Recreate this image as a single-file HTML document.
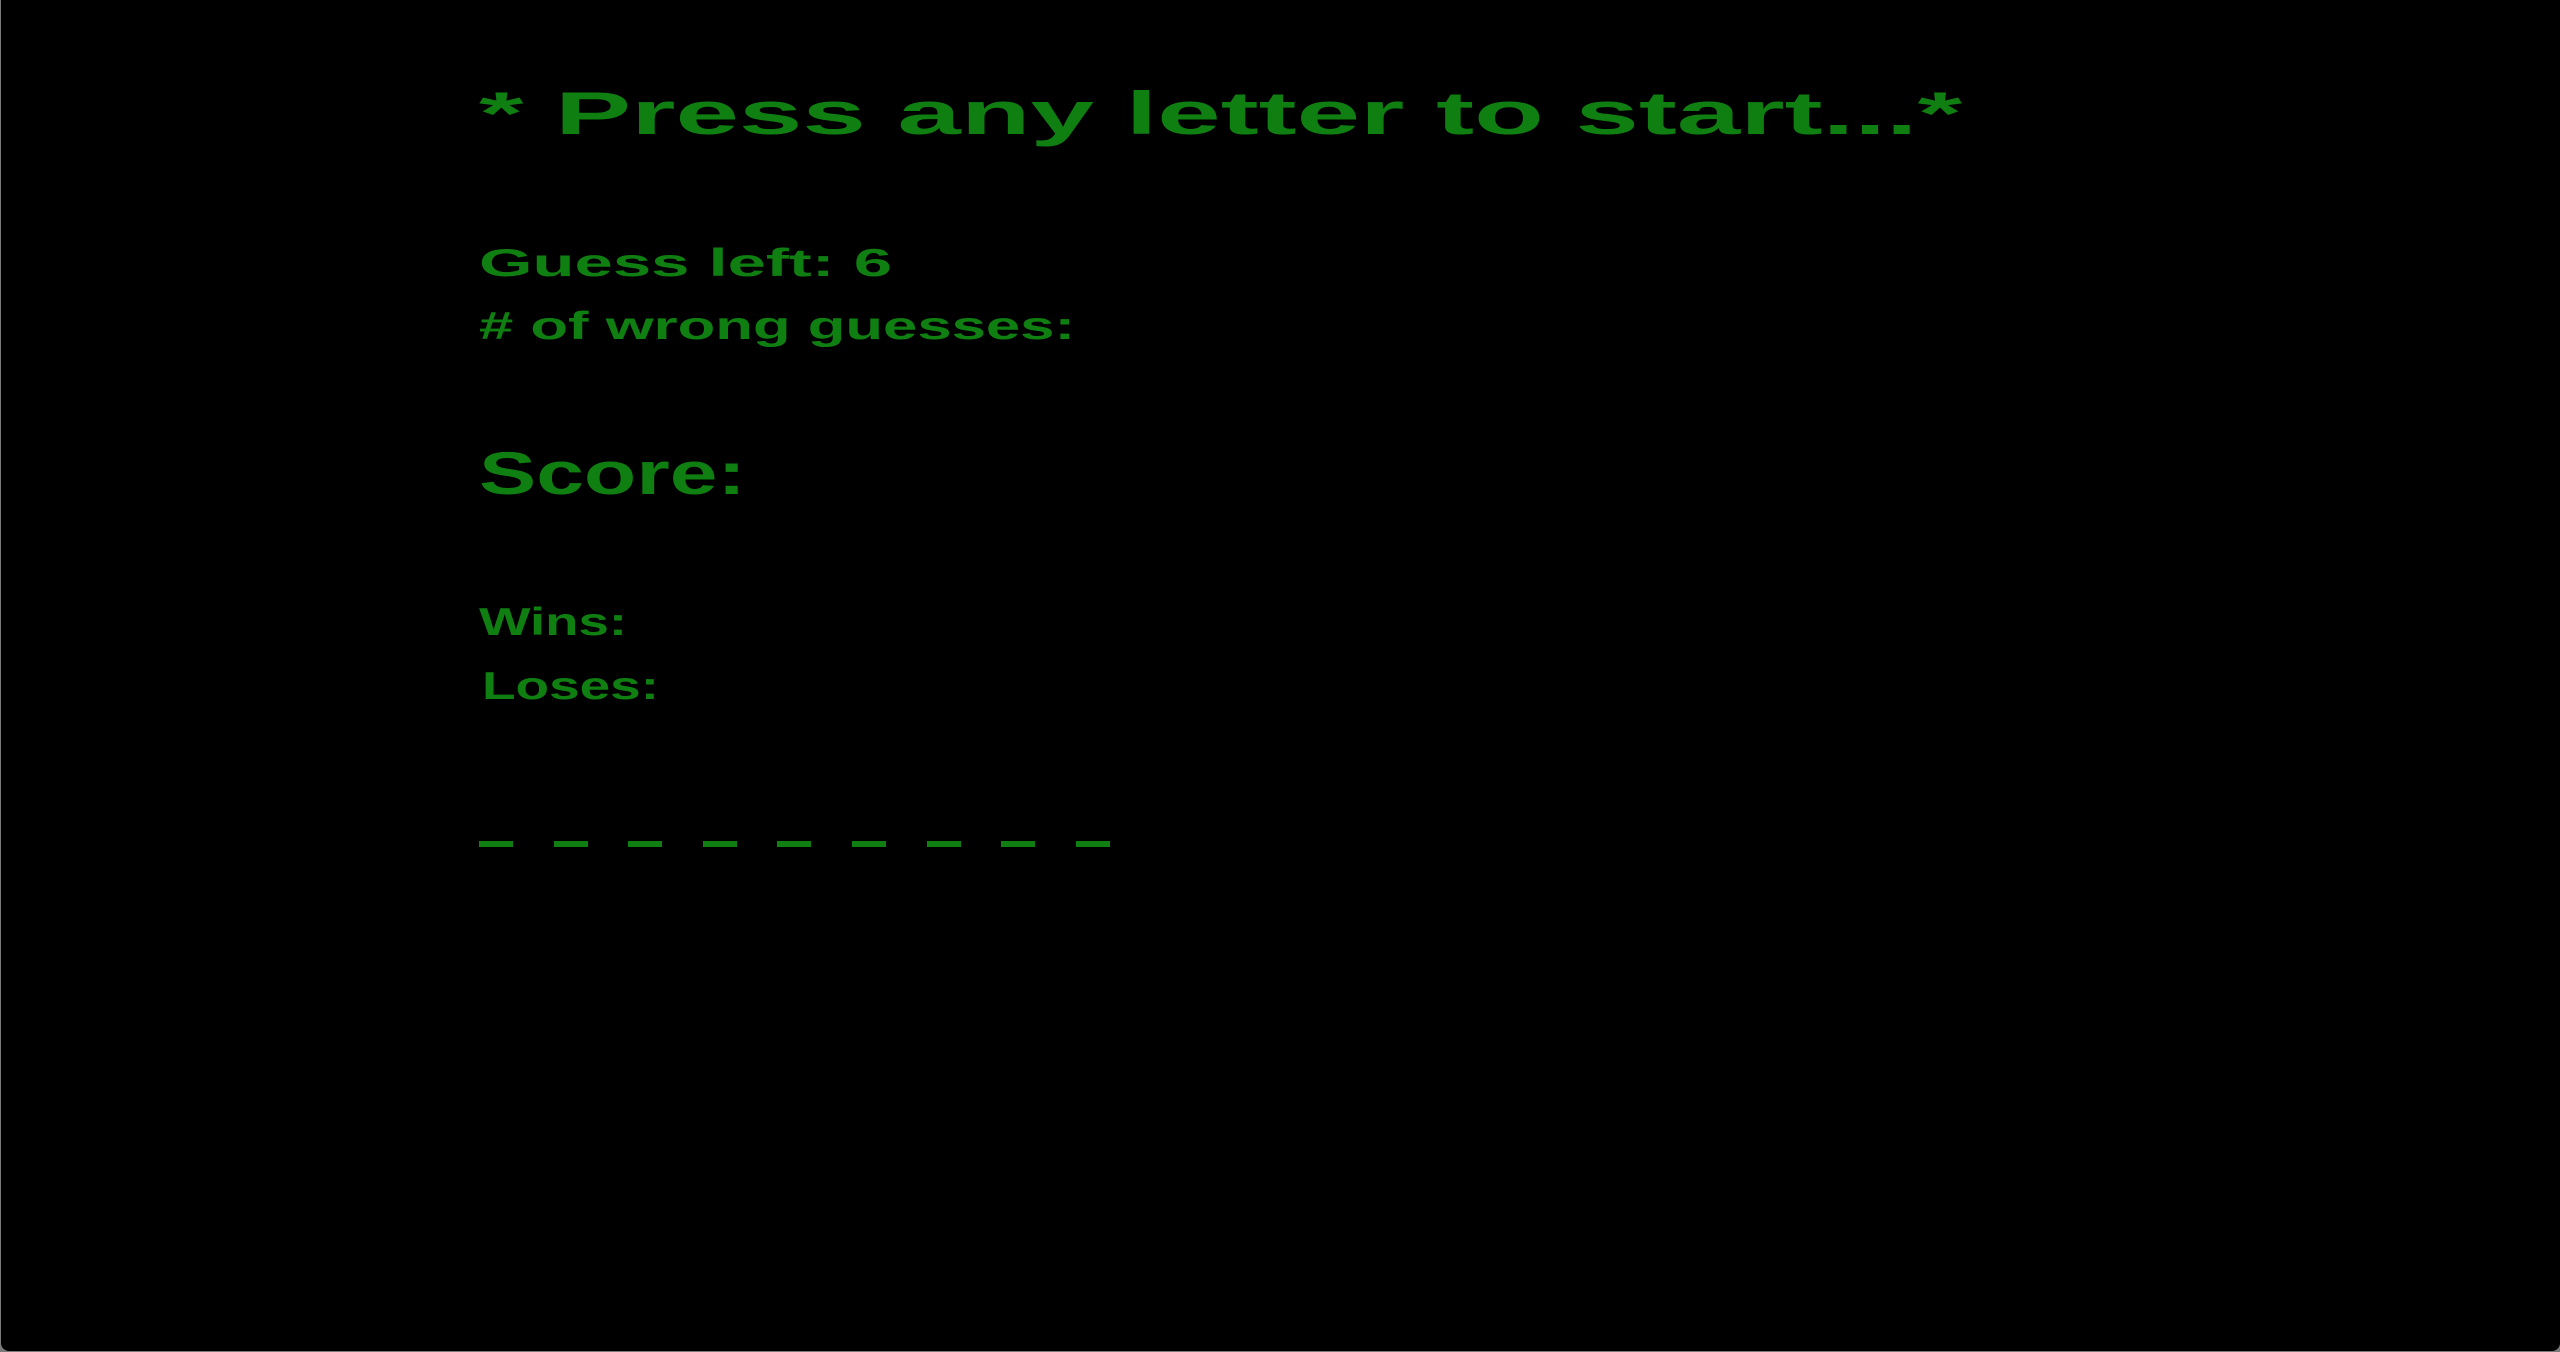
<!DOCTYPE html>
<html><head><meta charset="utf-8"><style>
html,body{margin:0;padding:0;width:2560px;height:1352px;background:#7a7a7a;overflow:hidden}
#p{position:absolute;left:1px;top:0;width:2559px;height:1351px;background:#000;border-radius:0 0 8px 8px}
svg{position:absolute;left:0;top:0}
text{font-family:"Liberation Sans",sans-serif;font-weight:bold;fill:#107f12}
</style></head><body>
<div id="p"></div>
<svg width="2560" height="1352">
<text x="479" y="134" font-size="60" textLength="1483" lengthAdjust="spacingAndGlyphs">* Press any letter to start...*</text>
<text x="479" y="276" font-size="39" textLength="413" lengthAdjust="spacingAndGlyphs">Guess left: 6</text>
<text x="479" y="339" font-size="39" textLength="596" lengthAdjust="spacingAndGlyphs"># of wrong guesses:</text>
<text x="479" y="494" font-size="60" textLength="267" lengthAdjust="spacingAndGlyphs">Score:</text>
<text x="479" y="635" font-size="39" textLength="148" lengthAdjust="spacingAndGlyphs">Wins:</text>
<text x="482" y="699" font-size="39" textLength="177" lengthAdjust="spacingAndGlyphs">Loses:</text>
<g fill="#107f12">
<rect x="479" y="841" width="34" height="6"/>
<rect x="554" y="841" width="34" height="6"/>
<rect x="628" y="841" width="34" height="6"/>
<rect x="703" y="841" width="34" height="6"/>
<rect x="777" y="841" width="34" height="6"/>
<rect x="852" y="841" width="34" height="6"/>
<rect x="927" y="841" width="34" height="6"/>
<rect x="1001" y="841" width="34" height="6"/>
<rect x="1076" y="841" width="34" height="6"/>
</g>
</svg>
</body></html>
